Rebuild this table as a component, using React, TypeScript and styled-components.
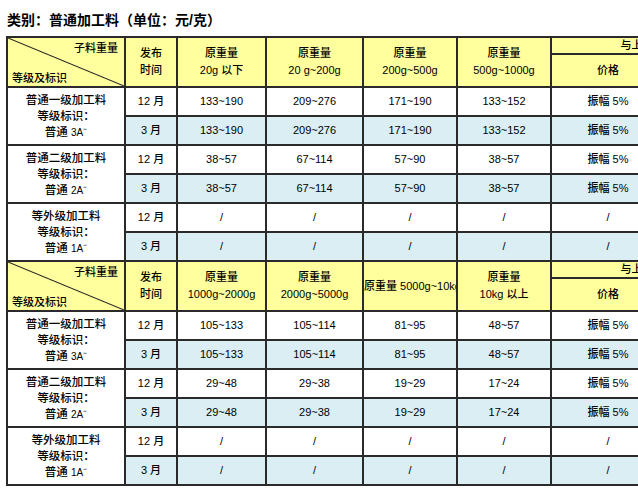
import React from 'react';
import styled, { createGlobalStyle } from 'styled-components';

const GlobalStyle = createGlobalStyle`
  html, body {
    margin: 0;
    padding: 0;
    background: #ffffff;
    overflow: hidden;
  }
  body {
    font-family: "Liberation Sans", "Noto Sans CJK SC", sans-serif;
    color: #000;
  }
`;

const Page = styled.div`
  width: 638px;
  height: 500px;
  overflow: hidden;
  padding: 11px 0 0 6px;
  box-sizing: border-box;
`;

const Title = styled.div`
  font-size: 14px;
  font-weight: bold;
  line-height: 18px;
  margin-bottom: 7px;
  padding-left: 1px;
  white-space: nowrap;
`;

const Table = styled.table`
  border-collapse: collapse;
  table-layout: fixed;
  width: 738px;
  font-size: 11px;
  font-weight: 500;
`;

const Col = styled.col<{ $w: number }>`
  width: ${(p) => p.$w}px;
`;

const Cell = styled.td<{ $head?: boolean; $alt?: boolean }>`
  border: 2px solid #2a2a2a;
  padding: 0;
  height: 27px;
  text-align: center;
  vertical-align: middle;
  white-space: nowrap;
  overflow: hidden;
  line-height: 17px;
  background: ${(p) => (p.$head ? '#ffff9e' : p.$alt ? '#daeef3' : '#ffffff')};
`;

const SubHead = styled(Cell)`
  height: 31px;
  background: #ffff9e;
`;

const DiagCell = styled.td`
  border: 2px solid #2a2a2a;
  padding: 0;
  background: linear-gradient(
      to top right,
      transparent calc(50% - 1px),
      #222 50%,
      transparent calc(50% + 1px)
    ),
    #ffff9e;
`;

const DiagInner = styled.div`
  height: 48px;
  display: flex;
  flex-direction: column;
  justify-content: space-between;
  padding: 3px 6px 0 4px;
  box-sizing: border-box;
  line-height: 15px;
`;

const DiagTop = styled.span`
  align-self: flex-end;
`;

const DiagBottom = styled.span`
  align-self: flex-start;
`;

const GradeCell = styled.td`
  border: 2px solid #2a2a2a;
  padding: 0;
  text-align: center;
  background: #ffffff;
  font-size: 11.5px;
  line-height: 16px;
`;

const Mark = styled.span`
  font-size: 10px;
`;

const HeadTop = styled.td`
  border: 2px solid #2a2a2a;
  padding: 0;
  height: 15px;
  line-height: 15px;
  text-align: center;
  white-space: nowrap;
  background: #ffff9e;
`;

type Block = {
  ranges: string[][];
  rows: { grade: string; mark: string; values: string[] }[];
};

const blocks: Block[] = [
  {
    ranges: [
      ['原重量', '20g 以下'],
      ['原重量', '20 g~200g'],
      ['原重量', '200g~500g'],
      ['原重量', '500g~1000g'],
    ],
    rows: [
      { grade: '普通一级加工料', mark: '3A', values: ['133~190', '209~276', '171~190', '133~152', '振幅 5%'] },
      { grade: '普通二级加工料', mark: '2A', values: ['38~57', '67~114', '57~90', '38~57', '振幅 5%'] },
      { grade: '等外级加工料', mark: '1A', values: ['/', '/', '/', '/', '/'] },
    ],
  },
  {
    ranges: [
      ['原重量', '1000g~2000g'],
      ['原重量', '2000g~5000g'],
      ['原重量 5000g~10kg'],
      ['原重量', '10kg 以上'],
    ],
    rows: [
      { grade: '普通一级加工料', mark: '3A', values: ['105~133', '105~114', '81~95', '48~57', '振幅 5%'] },
      { grade: '普通二级加工料', mark: '2A', values: ['29~48', '29~38', '19~29', '17~24', '振幅 5%'] },
      { grade: '等外级加工料', mark: '1A', values: ['/', '/', '/', '/', '/'] },
    ],
  },
];

const months = ['12 月', '3 月'];
const colWidths = [118, 52, 89, 97, 94, 94, 114, 80];

const HeaderRows = ({ ranges }: { ranges: string[][] }) => (
  <>
    <tr>
      <DiagCell rowSpan={2}>
        <DiagInner>
          <DiagTop>子料重量</DiagTop>
          <DiagBottom>等级及标识</DiagBottom>
        </DiagInner>
      </DiagCell>
      <Cell $head rowSpan={2}>
        发布
        <br />
        时间
      </Cell>
      {ranges.map((r, i) => (
        <Cell $head rowSpan={2} key={i}>
          {r.map((line, j) => (
            <React.Fragment key={j}>
              {j > 0 && <br />}
              {line}
            </React.Fragment>
          ))}
        </Cell>
      ))}
      <HeadTop colSpan={2}>与上期比较</HeadTop>
    </tr>
    <tr>
      <SubHead>价格</SubHead>
      <SubHead>涨跌</SubHead>
    </tr>
  </>
);

const App = () => {
  return (
    <Page>
      <GlobalStyle />
      <Title>类别：普通加工料（单位：元/克）</Title>
      <Table>
        <colgroup>
          {colWidths.map((w, i) => (
            <Col $w={w} key={i} />
          ))}
        </colgroup>
        <tbody>
          {blocks.map((b, bi) => (
            <React.Fragment key={bi}>
              <HeaderRows ranges={b.ranges} />
              {b.rows.map((row, ri) =>
                months.map((m, mi) => (
                  <tr key={`${ri}-${mi}`}>
                    {mi === 0 && (
                      <GradeCell rowSpan={2}>
                        {row.grade}
                        <br />
                        等级标识：
                        <br />
                        普通 <Mark>{row.mark}</Mark>⁻
                      </GradeCell>
                    )}
                    <Cell $alt={mi === 1}>{m}</Cell>
                    {row.values.map((v, vi) => (
                      <Cell $alt={mi === 1} key={vi}>
                        {v}
                      </Cell>
                    ))}
                    <Cell $alt={mi === 1}>{row.values[4] === '/' ? '/' : '—'}</Cell>
                  </tr>
                ))
              )}
            </React.Fragment>
          ))}
        </tbody>
      </Table>
    </Page>
  );
};

export default App;
